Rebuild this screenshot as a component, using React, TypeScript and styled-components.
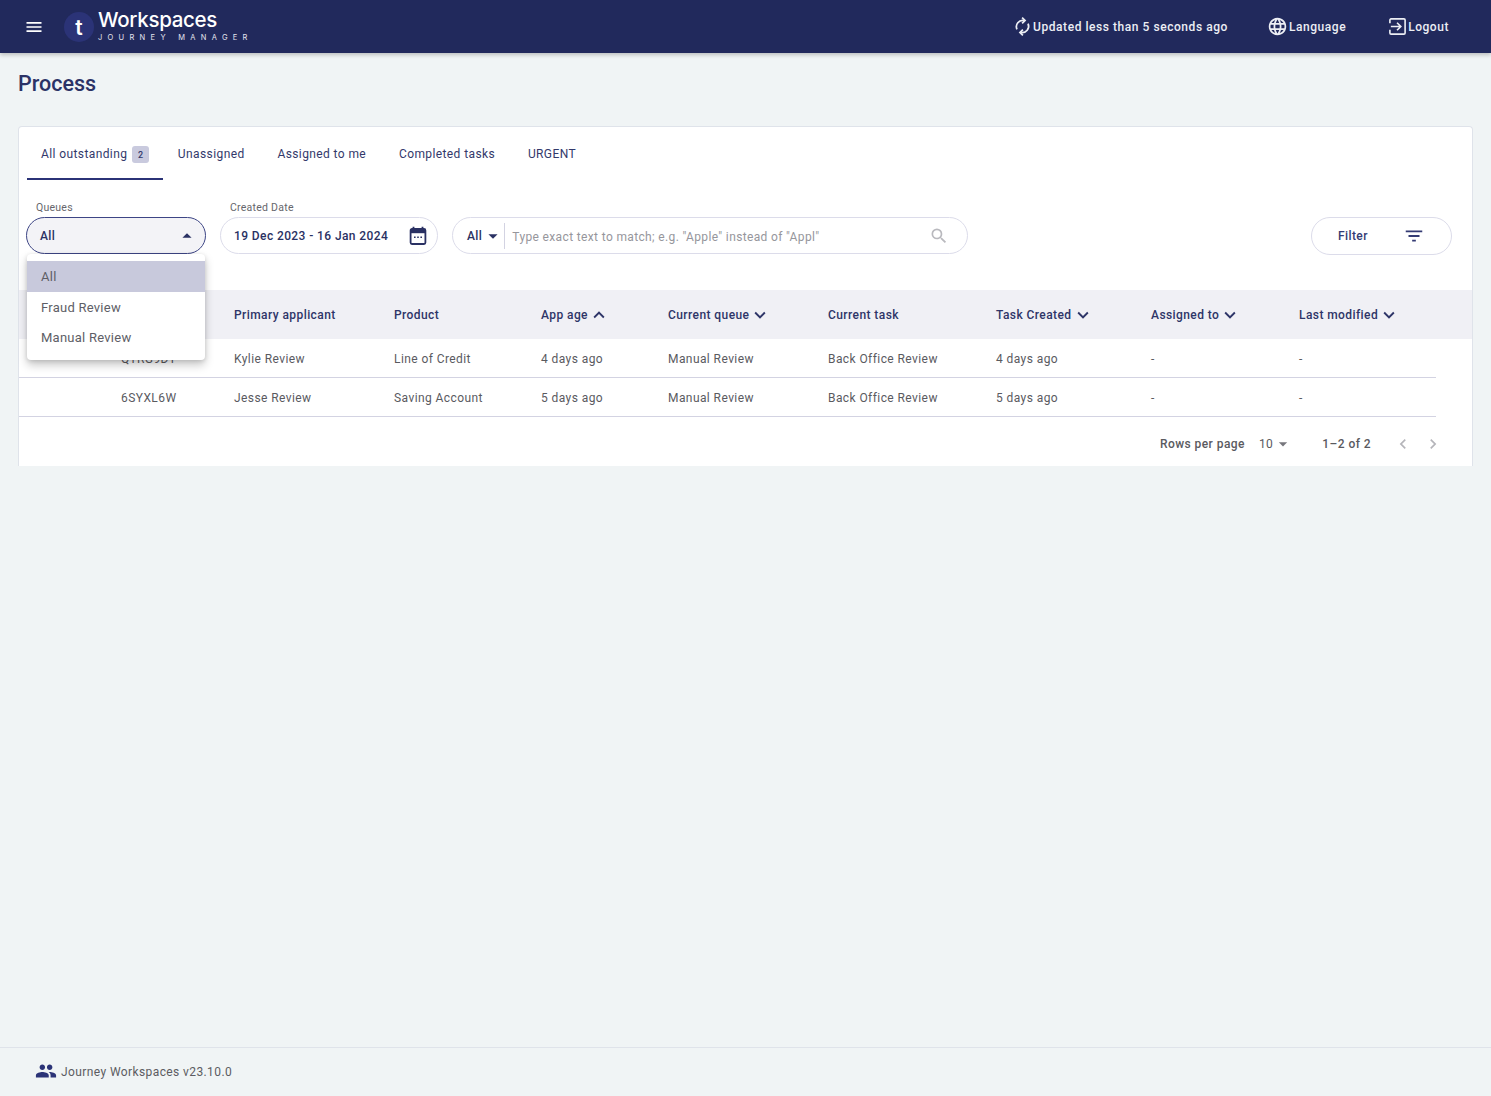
import styled, { createGlobalStyle } from "styled-components";
import {
  MdArrowDropDown,
  MdArrowDropUp,
  MdChevronLeft,
  MdChevronRight,
  MdFilterList,
  MdKeyboardArrowDown,
  MdKeyboardArrowUp,
  MdLanguage,
  MdMenu,
  MdPeople,
  MdSearch,
} from "react-icons/md";

const NAVY = "#21295c";
const TEXT = "#5a5a5f";
const LINE = "#d3d3e2";
const GRID = "102px 113px 160px 147px 127px 160px 168px 155px 148px 137px";

const GlobalStyle = createGlobalStyle`
  html, body {
    margin: 0;
    height: 100%;
    background: #f0f4f5;
    font-family: Roboto, "Liberation Sans", sans-serif;
    -webkit-font-smoothing: antialiased;
  }
  #root {
    height: 100%;
  }
`;

const Page = styled.div`
  display: flex;
  flex-direction: column;
  height: 1096px;
  overflow: hidden;
`;

const AppBar = styled.header`
  display: flex;
  align-items: center;
  flex-shrink: 0;
  height: 53px;
  padding: 0 42px 0 24px;
  background: ${NAVY};
  color: #fff;
  box-shadow: 0 2px 4px rgba(0, 0, 0, 0.22);
  position: relative;
  z-index: 2;
`;

const MenuIcon = styled(MdMenu)`
  width: 20px;
  height: 20px;
  margin-right: 20px;
`;

const LogoMark = styled.div`
  display: flex;
  align-items: center;
  justify-content: center;
  width: 30px;
  height: 30px;
  margin: 1px 4px 0 0;
  border-radius: 50%;
  background: #2b3377;
  font-family: Inter, sans-serif;
  font-size: 21px;
  font-weight: 600;
  line-height: 1;
`;

const LogoText = styled.div`
  display: flex;
  flex-direction: column;
  margin-top: -2px;
`;

const LogoTitle = styled.span`
  font-family: Inter, sans-serif;
  font-size: 20.5px;
  font-weight: 500;
  line-height: 24px;
  letter-spacing: -0.3px;
`;

const LogoSub = styled.span`
  font-family: Inter, sans-serif;
  font-size: 7.5px;
  line-height: 11px;
  letter-spacing: 5.3px;
  white-space: nowrap;
  color: #e4e5ee;
`;

const BarActions = styled.nav`
  display: flex;
  align-items: center;
  margin-left: auto;
`;

const BarAction = styled.div<{ $gap: number }>`
  display: flex;
  align-items: center;
  gap: 1px;
  margin-left: ${({ $gap }) => $gap}px;
  font-size: 12px;
  font-weight: 500;
  letter-spacing: 0.55px;
  color: #eceef4;
`;

const GlobeIcon = styled(MdLanguage)`
  width: 21px;
  height: 21px;
`;

const Main = styled.main`
  flex: 1;
  padding: 0 18px;
`;

const Title = styled.h1`
  margin: 16px 0 28px;
  font-size: 21.5px;
  font-weight: 500;
  line-height: 29px;
  color: #2b3266;
`;

const Card = styled.section`
  position: relative;
  height: 340px;
  box-sizing: border-box;
  border: 1px solid #dfe3ea;
  border-bottom: 0;
  border-radius: 4px 4px 0 0;
  background: #fff;
`;

const Tabs = styled.div`
  display: flex;
  height: 53px;
  padding-left: 8px;
`;

const Tab = styled.div<{ $active?: boolean }>`
  display: flex;
  align-items: flex-start;
  gap: 5px;
  box-sizing: border-box;
  height: 53px;
  padding: 19px ${({ $active }) => ($active ? 14 : 14.5)}px 0;
  margin-right: ${({ $active }) => ($active ? 0 : 3.8)}px;
  border-bottom: 2px solid ${({ $active }) => ($active ? "#2b3377" : "transparent")};
  font-size: 12px;
  line-height: 16px;
  letter-spacing: 0.4px;
  color: #33396b;
`;

const Count = styled.span`
  display: flex;
  align-items: center;
  justify-content: center;
  width: 17px;
  height: 17px;
  border-radius: 3px;
  background: #c9cade;
  font-size: 9px;
  font-weight: 500;
  color: #33396b;
`;

const Filters = styled.div`
  display: flex;
  align-items: flex-start;
  gap: 14px;
  height: 110px;
  padding: 21px 20px 0 7px;
  box-sizing: border-box;
`;

const Field = styled.div<{ $width: number }>`
  display: flex;
  flex-direction: column;
  width: ${({ $width }) => $width}px;
  flex-shrink: 0;
`;

const FieldLabel = styled.label`
  padding-left: 10px;
  margin-bottom: 2px;
  font-size: 10.5px;
  line-height: 14px;
  letter-spacing: 0.25px;
  color: #66666c;
`;

const Pill = styled.div<{ $focused?: boolean }>`
  display: flex;
  align-items: center;
  box-sizing: border-box;
  height: 37px;
  border-radius: 19px;
  border: 1px solid ${({ $focused }) => ($focused ? "#3d4585" : "#dcdcea")};
  background: ${({ $focused }) => ($focused ? "#f3f3f7" : "#fff")};
  font-size: 12px;
  font-weight: 500;
  letter-spacing: 0.4px;
  color: #2a3163;
`;

const SelectPill = styled(Pill)`
  justify-content: space-between;
  padding: 0 7px 0 13px;
`;

const DatePill = styled(Pill)`
  justify-content: space-between;
  padding: 0 9px 0 13px;
`;

const SearchPill = styled(Pill)`
  flex: 0 0 516px;
  margin-top: 16px;
  padding: 0 18px 0 14px;
`;

const SearchScope = styled.span`
  display: flex;
  align-items: center;
  box-sizing: border-box;
  height: 26px;
  border-right: 1px solid ${LINE};
`;

const Placeholder = styled.span`
  flex: 1;
  padding: 2px 0 0 7px;
  font-weight: 400;
  letter-spacing: 0.36px;
  color: #96969c;
`;

const FilterButton = styled(Pill).attrs({ as: "button" })`
  justify-content: space-between;
  width: 141px;
  height: 38px;
  margin-top: 16px;
  margin-left: auto;
  padding: 0 26px 1px 26px;
  font-family: inherit;
  color: #343b74;
`;

const Dropdown = styled.ul`
  position: absolute;
  z-index: 3;
  top: 127px;
  left: 8px;
  width: 178px;
  margin: 0;
  padding: 7px 0 8px;
  list-style: none;
  border-radius: 4px;
  background: #fff;
  box-shadow:
    0 5px 10px rgba(0, 0, 0, 0.22),
    0 1px 4px rgba(0, 0, 0, 0.12);
`;

const Option = styled.li<{ $selected?: boolean }>`
  display: flex;
  align-items: center;
  box-sizing: border-box;
  height: ${({ $selected }) => ($selected ? 31 : 30)}px;
  padding: ${({ $selected }) => ($selected ? "0 0 1px 14px" : "1px 0 0 14px")};
  background: ${({ $selected }) => ($selected ? "#c8c9dc" : "transparent")};
  font-size: 13px;
  letter-spacing: 0.25px;
  color: #5e5e66;
`;

const TableHead = styled.div`
  display: grid;
  grid-template-columns: ${GRID};
  align-items: center;
  height: 49px;
  background: #f0f0f5;
`;

const HeadCell = styled.div`
  display: flex;
  align-items: center;
  font-size: 12px;
  font-weight: 500;
  letter-spacing: 0.42px;
  color: #2e3568;

  svg {
    width: 22px;
    height: 22px;
  }
`;

const TableRow = styled.div`
  display: grid;
  grid-template-columns: ${GRID};
  align-items: center;
  width: 1417px;
  height: 39px;
  box-sizing: border-box;
  padding-top: 1px;
  border-bottom: 1px solid ${LINE};
`;

const Cell = styled.div`
  font-size: 12px;
  letter-spacing: 0.42px;
  color: ${TEXT};
`;

const Pagination = styled.div`
  display: flex;
  align-items: center;
  justify-content: flex-end;
  box-sizing: border-box;
  height: 49px;
  padding: 4px 29px 0 0;
  font-size: 12px;
  letter-spacing: 0.44px;
  color: ${TEXT};
`;

const RowsLabel = styled.span`
  font-weight: 500;
  margin-right: 14px;
`;

const RowsValue = styled.span`
  display: flex;
  align-items: center;
  margin-right: 29px;

  svg {
    width: 20px;
    height: 20px;
    color: #77777d;
  }
`;

const RangeText = styled.span`
  font-weight: 500;
  margin-right: 12px;
`;

const PageArrow = styled.span`
  display: flex;
  margin-left: 10px;
  color: #b5b5ba;

  svg {
    width: 20px;
    height: 20px;
  }
`;

const Footer = styled.footer`
  display: flex;
  align-items: center;
  gap: 4px;
  flex-shrink: 0;
  box-sizing: border-box;
  height: 49px;
  padding: 0 35px;
  border-top: 1px solid #dfe3ea;
  font-size: 12px;
  letter-spacing: 0.4px;
  color: #5c5c62;
`;

const PeopleIcon = styled(MdPeople)`
  width: 22px;
  height: 22px;
  color: #2b3377;
  margin-bottom: 2px;
`;

function SyncIcon() {
  return (
    <svg width="19" height="19" viewBox="0 0 24 24" fill="none" stroke="currentColor" strokeWidth="2.2">
      <path d="M5 15.5A8 8 0 0 1 14 4.4" />
      <path d="M11.5 0.8 15.2 4.4 11.5 8" />
      <path d="M19 8.5A8 8 0 0 1 10 19.6" />
      <path d="M12.5 16 8.8 19.6 12.5 23.2" />
    </svg>
  );
}

function ExitIcon() {
  return (
    <svg width="19" height="19" viewBox="0 0 20 20" fill="none" stroke="currentColor" strokeWidth="1.7">
      <path d="M2 6.5V3.2C2 2.5 2.5 2 3.2 2h13.6c.7 0 1.2.5 1.2 1.2v13.6c0 .7-.5 1.2-1.2 1.2H3.2C2.5 18 2 17.5 2 16.8v-3.3" />
      <path d="M3 10h10M9.5 6l4 4-4 4" />
    </svg>
  );
}

function CalendarIcon() {
  return (
    <svg width="20" height="20" viewBox="0 0 20 20" fill="none">
      <path d="M5.5 0.8v3M14.5 0.8v3" stroke="#2a3163" strokeWidth="1.8" />
      <rect x="2.6" y="3" width="14.8" height="15" rx="1.4" stroke="#2a3163" strokeWidth="1.8" />
      <path d="M2.6 4h14.8v3.2H2.6z" fill="#2a3163" />
      <path d="M6 11.2h1.6M9.2 11.2h1.6M12.4 11.2h1.6" stroke="#2a3163" strokeWidth="1.6" />
    </svg>
  );
}

const columns: { label: string; sort?: "up" | "down" }[] = [
  { label: "Primary applicant" },
  { label: "Product" },
  { label: "App age", sort: "up" },
  { label: "Current queue", sort: "down" },
  { label: "Current task" },
  { label: "Task Created", sort: "down" },
  { label: "Assigned to", sort: "down" },
  { label: "Last modified", sort: "down" },
];

const rows = [
  ["QTRG9DT", "Kylie Review", "Line of Credit", "4 days ago", "Manual Review", "Back Office Review", "4 days ago", "-", "-"],
  ["6SYXL6W", "Jesse Review", "Saving Account", "5 days ago", "Manual Review", "Back Office Review", "5 days ago", "-", "-"],
];

export default function App() {
  return (
    <>
      <GlobalStyle />
      <Page>
        <AppBar>
          <MenuIcon />
          <LogoMark>t</LogoMark>
          <LogoText>
            <LogoTitle>Workspaces</LogoTitle>
            <LogoSub>JOURNEY MANAGER</LogoSub>
          </LogoText>
          <BarActions>
            <BarAction $gap={0}>
              <SyncIcon />
              Updated less than 5 seconds ago
            </BarAction>
            <BarAction $gap={39}>
              <GlobeIcon />
              Language
            </BarAction>
            <BarAction $gap={42}>
              <ExitIcon />
              Logout
            </BarAction>
          </BarActions>
        </AppBar>

        <Main>
          <Title>Process</Title>
          <Card>
            <Tabs>
              <Tab $active>
                All outstanding <Count>2</Count>
              </Tab>
              <Tab>Unassigned</Tab>
              <Tab>Assigned to me</Tab>
              <Tab>Completed tasks</Tab>
              <Tab>URGENT</Tab>
            </Tabs>

            <Filters>
              <Field $width={180}>
                <FieldLabel>Queues</FieldLabel>
                <SelectPill $focused>
                  All
                  <MdArrowDropUp size={22} />
                </SelectPill>
              </Field>
              <Field $width={218}>
                <FieldLabel>Created Date</FieldLabel>
                <DatePill>
                  19 Dec 2023 - 16 Jan 2024
                  <CalendarIcon />
                </DatePill>
              </Field>
              <SearchPill>
                <SearchScope>
                  All
                  <MdArrowDropDown size={22} />
                </SearchScope>
                <Placeholder>Type exact text to match; e.g. "Apple" instead of "Appl"</Placeholder>
                <MdSearch size={20} color="#b9b9be" />
              </SearchPill>
              <FilterButton>
                Filter
                <MdFilterList size={22} />
              </FilterButton>
            </Filters>

            <Dropdown>
              <Option $selected>All</Option>
              <Option>Fraud Review</Option>
              <Option>Manual Review</Option>
            </Dropdown>

            <TableHead>
              <span />
              <span />
              {columns.map((c) => (
                <HeadCell key={c.label}>
                  {c.label}
                  {c.sort === "up" && <MdKeyboardArrowUp />}
                  {c.sort === "down" && <MdKeyboardArrowDown />}
                </HeadCell>
              ))}
            </TableHead>
            {rows.map((r) => (
              <TableRow key={r[0]}>
                <span />
                {r.map((v, i) => (
                  <Cell key={i}>{v}</Cell>
                ))}
              </TableRow>
            ))}

            <Pagination>
              <RowsLabel>Rows per page</RowsLabel>
              <RowsValue>
                10
                <MdArrowDropDown />
              </RowsValue>
              <RangeText>1–2 of 2</RangeText>
              <PageArrow>
                <MdChevronLeft />
              </PageArrow>
              <PageArrow>
                <MdChevronRight />
              </PageArrow>
            </Pagination>
          </Card>
        </Main>

        <Footer>
          <PeopleIcon />
          Journey Workspaces v23.10.0
        </Footer>
      </Page>
    </>
  );
}
